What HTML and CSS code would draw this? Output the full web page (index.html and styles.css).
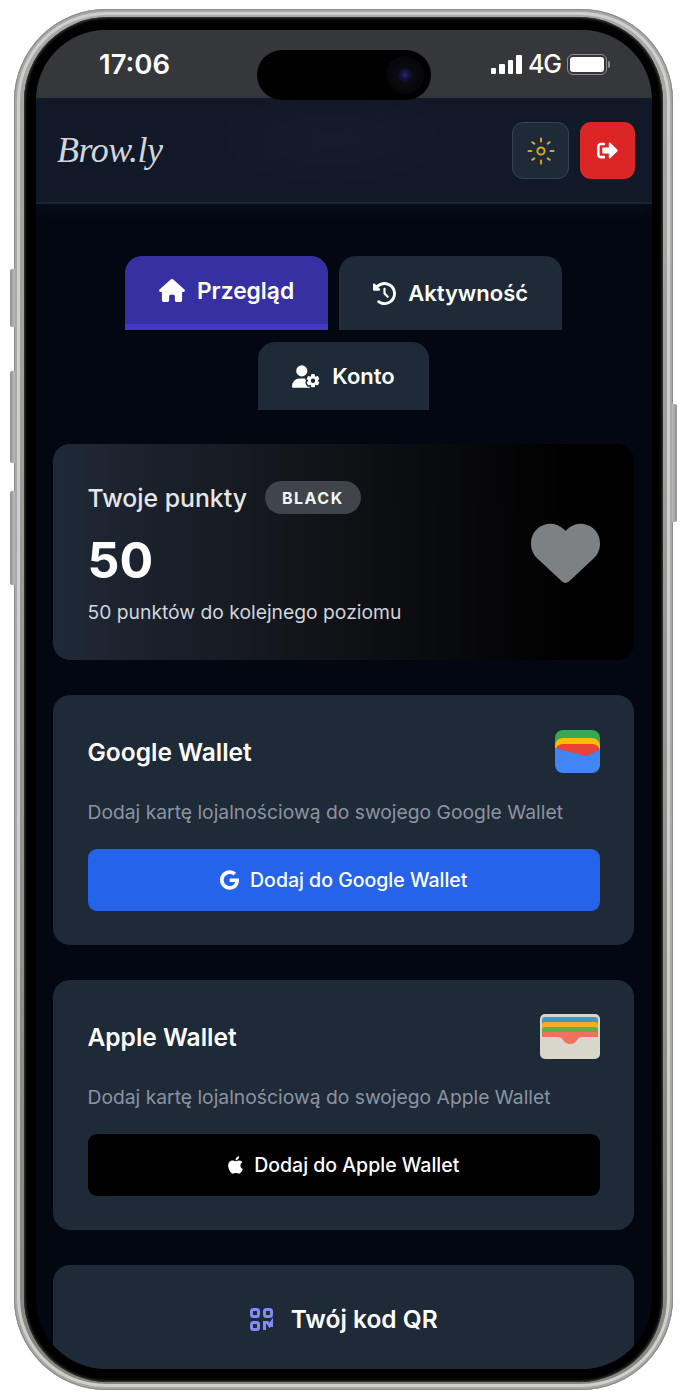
FILE: index.html
```html
<!DOCTYPE html>
<html lang="pl">
<head>
    <meta charset="UTF-8">
    <meta name="viewport" content="width=device-width, initial-scale=1.0">
    <link rel="stylesheet" href="styles.css">
    <title>Brow.ly</title>
</head>
<body>

<div class="phone">
    <span class="side-btn side-btn-1"></span>
    <span class="side-btn side-btn-2"></span>
    <span class="side-btn side-btn-3"></span>
    <span class="side-btn side-btn-right"></span>

    <div class="bezel">
        <div class="screen">
            <div class="island"><span class="camera"></span></div>

            <div class="status-bar">
                <span class="time">17:06</span>
                <div class="status-right">
                    <div class="signal"><i></i><i></i><i></i><i></i></div>
                    <span class="network">4G</span>
                    <div class="battery"><span class="battery-fill"></span></div>
                    <span class="battery-cap"></span>
                </div>
            </div>

            <header class="app-header">
                <span class="logo">Brow.ly</span>
                <div class="header-actions">
                    <button class="icon-btn theme-btn" aria-label="Motyw">
                        <svg width="30" height="30" viewBox="0 0 30 30" fill="none" stroke="#d5a52c" stroke-linecap="round">
                            <circle cx="15" cy="15" r="3.6" stroke-width="2"/>
                            <path stroke-width="2" d="M15 2.5v3M15 24.5v3M2.5 15h3M24.5 15h3M6.2 6.2l2.1 1.4M21.7 22.4l2.1 1.4M23.8 6.2l-2.1 1.4M8.3 22.4l-2.1 1.4"/>
                        </svg>
                    </button>
                    <button class="icon-btn logout-btn" aria-label="Wyloguj">
                        <svg width="21" height="21" viewBox="0 0 512 512" fill="#fff"><path d="M497 273L329 441c-15 15-41 4.500-41-17v-96H152c-13.300 0-24-10.700-24-24v-96c0-13.300 10.700-24 24-24h136V88c0-21.400 25.900-32 41-17l168 168c9.300 9.400 9.300 24.600 0 34zM192 436v-40c0-6.600-5.400-12-12-12H96c-17.700 0-32-14.300-32-32V160c0-17.700 14.300-32 32-32h84c6.600 0 12-5.400 12-12V76c0-6.600-5.400-12-12-12H96c-53 0-96 43-96 96v192c0 53 43 96 96 96h84c6.600 0 12-5.400 12-12z"/></svg>
                    </button>
                </div>
            </header>

            <main class="content">
                <nav class="tabs">
                    <a class="tab tab-active">
                        <svg width="26" height="23" viewBox="0 0 576 512" fill="#fff"><path d="M575.800 255.500c0 18-15 32.100-32 32.100h-32l.7 160.200c0 2.700-.2 5.400-.5 8.100V472c0 22.100-17.900 40-40 40H456c-1.100 0-2.200 0-3.300-.1c-1.400 .1-2.800 .1-4.200 .1H416 392c-22.100 0-40-17.900-40-40V448 384c0-17.700-14.300-32-32-32H256c-17.700 0-32 14.300-32 32v64 24c0 22.100-17.900 40-40 40H160 128.100c-1.500 0-3-.1-4.500-.2c-1.200 .1-2.400 .2-3.600 .2H104c-22.100 0-40-17.900-40-40V360c0-.9 0-1.900 .1-2.800V287.600H32c-18 0-32-14-32-32.100c0-9 3-17 10-24L266.400 8c7-7 15-8 22-8s15 2 21 7L564.800 231.500c8 7 12 15 11 24z"/></svg>
                        Przegląd
                    </a>
                    <a class="tab">
                        <svg width="23" height="23" viewBox="0 0 512 512" fill="#fff"><path d="M75 75L41 41C25.900 25.900 0 36.600 0 57.900V168c0 13.300 10.700 24 24 24H134.100c21.400 0 32.100-25.900 17-41l-30.800-30.800C155 85.500 203 64 256 64c106 0 192 86 192 192s-86 192-192 192c-40.800 0-78.600-12.700-109.700-34.400c-14.500-10.100-34.400-6.600-44.600 7.900s-6.600 34.400 7.900 44.600C151.200 495 201.700 512 256 512c141.400 0 256-114.600 256-256S397.400 0 256 0C185.300 0 121.300 28.700 75 75zm181 53c-13.300 0-24 10.700-24 24V256c0 6.400 2.500 12.500 7 17l72 72c9.400 9.400 24.600 9.400 33.900 0s9.400-24.600 0-33.900l-65-65V152c0-13.300-10.700-24-24-24z"/></svg>
                        Aktywność
                    </a>
                    <a class="tab">
                        <svg width="28" height="23" viewBox="0 0 640 512" fill="#fff"><path d="M224 0a128 128 0 1 1 0 256A128 128 0 1 1 224 0zM178.300 304h91.400c11.800 0 23.400 1.200 34.500 3.300c-2.100 18.500 7.400 35.600 21.800 44.800c-16.600 10.600-26.700 31.600-20 53.300c4 12.900 9.400 25.500 16.400 37.600s15.200 23.100 24.400 33c15.700 16.900 39.600 18.400 57.200 8.700v.9c0 9.200 2.700 18.500 7.900 26.300H29.700C13.300 512 0 498.700 0 482.300C0 383.800 79.800 304 178.300 304zM436 218.200c0-7 4.500-13.300 11.300-14.800c10.500-2.400 21.500-3.700 32.700-3.700s22.200 1.300 32.700 3.700c6.800 1.500 11.300 7.800 11.300 14.800v30.600c7.900 3.400 15.400 7.700 22.300 12.800l24.900-14.300c6.100-3.500 13.700-2.700 18.500 2.400c7.600 8.100 14.300 17.200 20.100 27.200s10.300 20.400 13.500 31c2.100 6.700-1.100 13.700-7.200 17.200l-25 14.400c.4 4 .7 8.100 .7 12.300s-.2 8.200-.7 12.300l25 14.400c6.100 3.500 9.200 10.500 7.200 17.200c-3.300 10.600-7.800 21-13.500 31s-12.500 19.100-20.100 27.200c-4.800 5.100-12.500 5.900-18.500 2.400l-24.900-14.300c-6.900 5.100-14.300 9.400-22.300 12.800l0 30.600c0 7-4.500 13.300-11.300 14.800c-10.500 2.400-21.500 3.700-32.700 3.700s-22.200-1.300-32.700-3.700c-6.800-1.500-11.300-7.800-11.300-14.800V454.800c-8-3.400-15.600-7.700-22.500-12.900l-24.700 14.300c-6.100 3.500-13.700 2.700-18.500-2.400c-7.600-8.100-14.300-17.200-20.100-27.200s-10.300-20.400-13.500-31c-2.100-6.700 1.100-13.700 7.200-17.200l24.800-14.300c-.4-4.100-.7-8.200-.7-12.400s.2-8.300 .7-12.400L343.800 325c-6.100-3.500-9.200-10.500-7.200-17.200c3.300-10.600 7.700-21 13.500-31s12.500-19.100 20.100-27.200c4.800-5.100 12.400-5.900 18.500-2.400l24.800 14.300c6.900-5.100 14.500-9.400 22.500-12.900V218.200zm92.100 133.500a48.100 48.100 0 1 0 -96.100 0 48.100 48.100 0 1 0 96.100 0z"/></svg>
                        Konto
                    </a>
                </nav>

                <section class="points-card">
                    <div>
                        <div class="points-title-row">
                            <span class="points-title">Twoje punkty</span>
                            <span class="tier-badge">BLACK</span>
                        </div>
                        <div class="points-value">50</div>
                        <div class="points-note">50 punktów do kolejnego poziomu</div>
                    </div>
                    <svg class="points-heart" width="69" height="69" viewBox="0 0 512 512"><path d="M47.600 300.400L228.300 469.100c7.500 7 17.400 10.900 27.700 10.900s20.200-3.900 27.700-10.900L464.400 300.400c30.400-28.300 47.600-68 47.600-109.500v-5.800c0-69.900-50.500-129.500-119.400-141C347 36.500 300.600 51.400 268 84L256 96 244 84c-32.600-32.600-79-47.500-124.600-39.900C50.500 55.600 0 115.200 0 185.100v5.800c0 41.500 17.200 81.200 47.600 109.500z"/></svg>
                </section>

                <section class="card">
                    <div class="card-head">
                        <h3>Google Wallet</h3>
                        <svg width="45" height="43" viewBox="0 0 45 43">
                            <path fill="#34a853" d="M8 0h29a8 8 0 0 1 8 8v12H0V8a8 8 0 0 1 8-8z"/>
                            <path fill="#fbbc04" d="M8 8h29a8 8 0 0 1 8 8v12H0V16a8 8 0 0 1 8-8z"/>
                            <path fill="#ea4335" d="M8 14h29a8 8 0 0 1 8 8v8H0v-8a8 8 0 0 1 8-8z"/>
                            <path fill="#4285f4" d="M0 18l29 7.500c2 .5 3.500 .3 5-.5L45 19v16a8 8 0 0 1-8 8H8a8 8 0 0 1-8-8z"/>
                        </svg>
                    </div>
                    <p class="card-desc">Dodaj kartę lojalnościową do swojego Google Wallet</p>
                    <a class="wallet-btn google-btn">
                        <svg width="19" height="20" viewBox="0 0 488 512" fill="#fff"><path d="M488 261.800C488 403.300 391.100 504 248 504 110.800 504 0 393.200 0 256S110.800 8 248 8c66.800 0 123 24.500 166.300 64.900l-67.500 64.900C258.500 52.600 94.300 116.600 94.300 256c0 86.500 69.100 156.600 153.700 156.600 98.200 0 135-70.400 140.800-106.900H248v-85.300h236.100c2.300 12.700 3.900 24.900 3.900 41.400z"/></svg>
                        Dodaj do Google Wallet
                    </a>
                </section>

                <section class="card">
                    <div class="card-head">
                        <h3>Apple Wallet</h3>
                        <svg width="60" height="45" viewBox="0 0 60 45">
                            <rect width="60" height="45" rx="5" fill="#d9d6cc"/>
                            <path fill="#3f97c9" d="M2 6a3 3 0 0 1 3-3h50a3 3 0 0 1 3 3v4H2z"/>
                            <path fill="#f2b01e" d="M2 11a3 3 0 0 1 3-3h50a3 3 0 0 1 3 3v4H2z"/>
                            <path fill="#5fb146" d="M2 16a3 3 0 0 1 3-3h50a3 3 0 0 1 3 3v4H2z"/>
                            <path fill="#f2705f" d="M2 21a3 3 0 0 1 3-3h50a3 3 0 0 1 3 3v2H42c-2.500 0-3.500 1-5 3-1.500 2.500-4 4-7 4s-5.500-1.500-7-4c-1.500-2-2.500-3-5-3H2z"/>
                        </svg>
                    </div>
                    <p class="card-desc">Dodaj kartę lojalnościową do swojego Apple Wallet</p>
                    <a class="wallet-btn apple-btn">
                        <svg width="15" height="20" viewBox="0 0 384 512" fill="#fff"><path d="M318.700 268.700c-.2-36.700 16.400-64.400 50-84.800-18.800-26.900-47.200-41.700-84.700-44.600-35.500-2.800-74.300 20.700-88.500 20.700-15 0-49.400-19.700-76.400-19.700C63.300 141.200 4 184.800 4 273.500q0 39.300 14.400 81.200c12.800 36.700 59 126.700 107.200 125.200 25.200-.6 43-17.900 75.800-17.900 31.800 0 48.300 17.900 76.400 17.900 48.600-.7 90.400-82.500 102.600-119.300-65.200-30.700-61.700-90-61.700-91.900zm-56.600-164.200c27.300-32.400 24.800-61.900 24-72.500-24.100 1.400-52 16.400-67.900 34.900-17.500 19.800-27.800 44.300-25.600 71.900 26.100 2 49.900-11.400 69.500-34.300z"/></svg>
                        Dodaj do Apple Wallet
                    </a>
                </section>

                <section class="card qr-card">
                    <svg width="23" height="23" viewBox="0 0 23 23" fill="none" stroke="#818cf8" stroke-width="3">
                        <rect x="1.500" y="1.500" width="7" height="7" rx="2"/>
                        <rect x="14.500" y="1.500" width="7" height="7" rx="2"/>
                        <rect x="1.500" y="14.500" width="7" height="7" rx="2"/>
                        <path d="M14.500 22v-7.500h3l2 3 2-3V19"/>
                    </svg>
                    <h3>Twój kod QR</h3>
                </section>
            </main>
        </div>
    </div>
</div>

</body>
</html>
```

FILE: styles.css
```css
body {
    font-family: Inter, "Liberation Sans", sans-serif;
    background-color: #ffffff;
    margin: 0;
    padding: 9px 0 0 14px;
    height: 1390px;
    box-sizing: border-box;
    overflow: hidden;
}

/* phone frame */
.phone {
    position: relative;
    width: 659px;
    height: 1381px;
    box-sizing: border-box;
    padding: 8px 10px;
    border-radius: 92px;
    background: linear-gradient(180deg, #a8a8a8, #86867f);
    box-shadow: inset 0 0 0 1px #8a8a8a, inset 0 0 0 3px #a8a8a8, inset 0 0 0 6px #cfcfcc;
}

.side-btn {
    position: absolute;
    width: 5px;
    left: -4px;
    background: linear-gradient(90deg, #8f8f8f, #bdbdbd);
    border-radius: 2px 0 0 2px;
}

.side-btn-1 { top: 260px; height: 58px; }
.side-btn-2 { top: 362px; height: 92px; }
.side-btn-3 { top: 482px; height: 94px; }

.side-btn-right {
    left: auto;
    right: -4px;
    top: 395px;
    height: 118px;
    background: linear-gradient(90deg, #bdbdbd, #8f8f8f);
    border-radius: 0 2px 2px 0;
}

.bezel {
    height: 100%;
    box-sizing: border-box;
    padding: 13px 11px 13px 12px;
    border-radius: 84px;
    background-color: #000;
    box-shadow: inset 0 0 3px 1px #444;
}

.screen {
    position: relative;
    height: 100%;
    overflow: hidden;
    border-radius: 70px;
    background-color: #030712;
}

.island {
    position: absolute;
    top: 20px;
    left: 221px;
    width: 174px;
    height: 50px;
    border-radius: 25px;
    background-color: #000;
    z-index: 2;
}

.camera {
    position: absolute;
    top: 6px;
    right: 7px;
    width: 38px;
    height: 38px;
    border-radius: 50%;
    background: radial-gradient(circle, #26267a 0, #14143c 4px, #0a0a14 8px, #060606 19px);
}

/* status bar */
.status-bar {
    height: 68px;
    box-sizing: border-box;
    padding: 18px 42px 0 63px;
    display: flex;
    justify-content: space-between;
    align-items: flex-start;
    background-color: #36373b;
    color: #fff;
}

.time {
    font-size: 27.5px;
    font-weight: 600;
    line-height: 32px;
}

.status-right {
    display: flex;
    align-items: center;
    height: 32px;
}

.signal {
    display: flex;
    align-items: flex-end;
    gap: 3px;
    height: 19px;
}

.signal i {
    width: 5.500px;
    background-color: #fff;
    border-radius: 1px;
}

.signal i:nth-child(1) { height: 6px; }
.signal i:nth-child(2) { height: 10px; }
.signal i:nth-child(3) { height: 14px; }
.signal i:nth-child(4) { height: 19px; }

.network {
    font-size: 25px;
    font-weight: 500;
    margin: 0 6px;
    letter-spacing: -1px;
}

.battery {
    width: 40px;
    height: 21px;
    box-sizing: border-box;
    padding: 2px;
    border: 1.500px solid #8e8e90;
    border-radius: 6px;
}

.battery-fill {
    display: block;
    height: 100%;
    background-color: #fff;
    border-radius: 3px;
}

.battery-cap {
    width: 2px;
    height: 7px;
    margin-left: 1px;
    background-color: #8e8e90;
    border-radius: 0 2px 2px 0;
}

/* app header */
.app-header {
    height: 106px;
    box-sizing: border-box;
    padding: 24px 17px 0 21px;
    display: flex;
    justify-content: space-between;
    align-items: flex-start;
    background: radial-gradient(ellipse 130px 50px at 48% 40%, #141c2c, #111827);
    border-bottom: 2px solid #1c2535;
    box-shadow: 0 6px 14px rgba(31, 41, 55, 0.25);
}

.logo {
    font-family: "Liberation Serif", serif;
    font-style: italic;
    font-size: 36px;
    line-height: 57px;
    color: #d1d5db;
    letter-spacing: -0.5px;
}

.header-actions {
    display: flex;
    gap: 11px;
}

.icon-btn {
    height: 57px;
    padding: 0;
    display: flex;
    align-items: center;
    justify-content: center;
    border-radius: 11px;
    border: none;
}

.theme-btn {
    width: 57px;
    background-color: #1e2a38;
    border: 1.500px solid #374151;
}

.logout-btn {
    width: 55px;
    background-color: #dc2626;
}

/* main */
.content {
    padding: 52px 18px 0 17px;
}

.tabs {
    display: flex;
    flex-wrap: wrap;
    justify-content: center;
    gap: 12px 11px;
    margin-bottom: 34px;
}

.tab {
    display: flex;
    align-items: center;
    gap: 12px;
    height: 68px;
    box-sizing: content-box;
    padding: 0 34px;
    font-size: 22px;
    font-weight: 600;
    color: #fff;
    background-color: #1e2a38;
    border-radius: 17px 17px 0 0;
}

.tab:nth-child(2) {
    height: 74px;
}

.tab-active {
    font-size: 22.800px;
    background-color: #3730a3;
    border-bottom: 6px solid #4338ca;
}

.points-card {
    display: flex;
    justify-content: space-between;
    align-items: center;
    padding: 35px 34px 35px 34.500px;
    height: 216px;
    box-sizing: border-box;
    margin-bottom: 35px;
    border-radius: 17px;
    background: linear-gradient(90deg, #1f2937, #171b22 30%, #0c0d10 60%, #000000 90%);
}

.points-title-row {
    display: flex;
    align-items: center;
    gap: 18px;
    height: 38px;
}

.points-title {
    font-size: 24.800px;
    font-weight: 500;
    color: #e5e7eb;
}

.tier-badge {
    padding: 0 17px;
    height: 33px;
    line-height: 35px;
    font-size: 16px;
    font-weight: 700;
    letter-spacing: 1.500px;
    color: #f3f4f6;
    background-color: #40444b;
    border-radius: 17px;
}

.points-value {
    margin-top: 13px;
    font-size: 50px;
    font-weight: 700;
    line-height: 60px;
    color: #fff;
}

.points-note {
    margin-top: 9px;
    font-size: 19.300px;
    line-height: 27px;
    color: #d1d5db;
}

.points-heart {
    fill: #7d8184;
}

.card {
    height: 250px;
    box-sizing: border-box;
    padding: 35px 34px 0 34.500px;
    margin-bottom: 35px;
    border-radius: 17px;
    background-color: #1e2a38;
}

.card-head {
    display: flex;
    justify-content: space-between;
    align-items: center;
    height: 43px;
}

h3 {
    margin: 0;
    font-size: 24.500px;
    font-weight: 600;
    color: #fff;
}

.card-desc {
    margin: 26px 0 23px;
    font-size: 19.300px;
    line-height: 27px;
    color: #8b93a1;
}

.wallet-btn {
    display: flex;
    align-items: center;
    justify-content: center;
    gap: 11px;
    height: 62px;
    font-size: 19.500px;
    font-weight: 500;
    color: #fff;
    border-radius: 9px;
}

.google-btn {
    background-color: #2563eb;
}

.apple-btn {
    background-color: #000;
}

.qr-card {
    height: 140px;
    display: flex;
    justify-content: center;
    align-items: flex-start;
    gap: 18px;
    padding-top: 35px;
    margin-bottom: 0;
}

.qr-card svg {
    margin-top: 8px;
}

.qr-card h3 {
    line-height: 38px;
}
```
